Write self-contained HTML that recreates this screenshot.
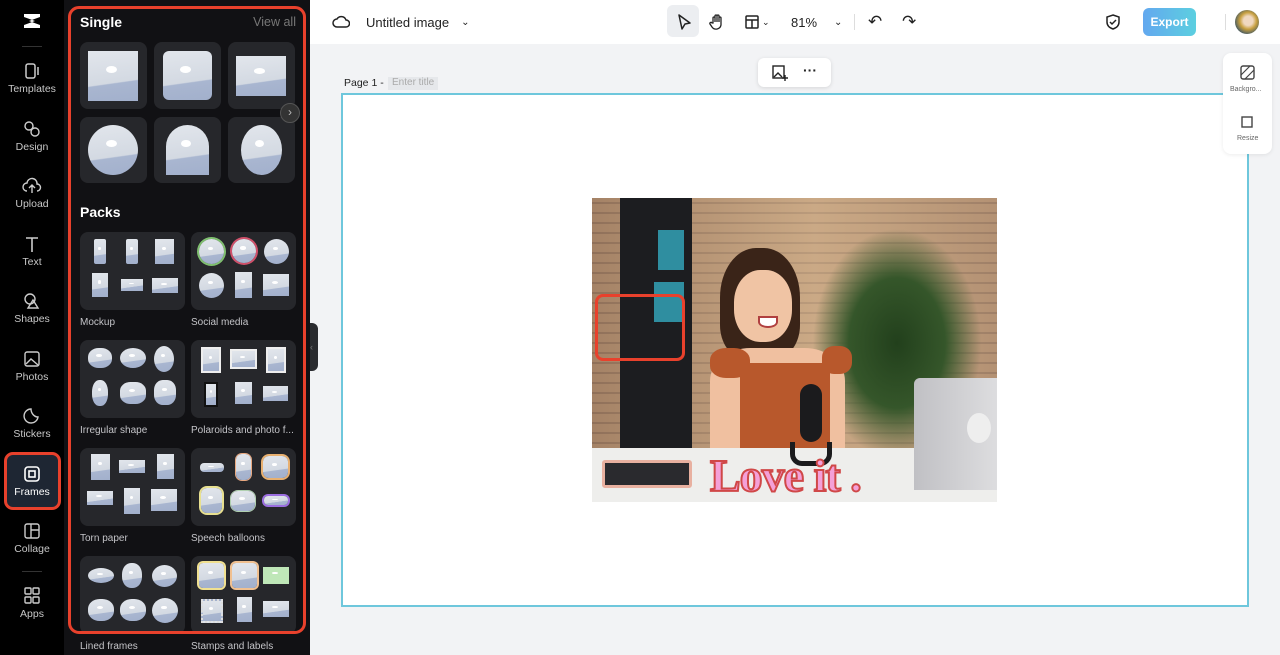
<!DOCTYPE html>
<html><head><meta charset="utf-8"><style>
*{margin:0;padding:0;box-sizing:border-box}
body{width:1280px;height:655px;overflow:hidden;font-family:"Liberation Sans",sans-serif;background:#f2f3f5;position:relative}
.abs{position:absolute}
#side{left:0;top:0;width:64px;height:655px;background:#000}
.si{position:absolute;left:0;width:64px;text-align:center;color:#c8c8c8;font-size:10.5px}
.si svg{display:block;margin:0 auto 3px}
#panel{left:64px;top:0;width:246px;height:655px;background:#111114}
.card{position:absolute;background:#26272b;border-radius:8px}
.ph{position:absolute;background:linear-gradient(172deg,#e2e6ec 0%,#d3d9e2 62%,#a9b6d0 64%,#a2b0cc 100%)}
.ph::after{content:"";position:absolute;left:35%;top:30%;width:22%;height:14%;background:#fff;border-radius:50%}
.lbl{position:absolute;color:#c4c4c8;font-size:10px}
h3{position:absolute;color:#fff;font-size:14px;font-weight:bold}
#top{left:310px;top:0;width:970px;height:44px;background:#fff}
.tb{position:absolute;top:0;height:44px;display:flex;align-items:center;font-size:13px;color:#222}
</style></head><body>
<div id="side" class="abs">
 <div class="si" style="top:10px"><svg width="22" height="22" viewBox="0 0 22 22"><path d="M3 4 L19 4 L19 7 L8 11 L19 15 L19 18 L3 18 L3 15 L14 11 L3 7Z" fill="#fff"/></svg></div>
 <div class="abs" style="left:22px;top:46px;width:20px;height:1px;background:#333"></div>
 <div class="si" style="top:62px"><svg width="20" height="18"><rect x="4" y="2" width="9" height="14" rx="2" fill="none" stroke="#ccc" stroke-width="1.5"/><path d="M16 5v8" stroke="#ccc" stroke-width="1.5"/></svg>Templates</div>
 <div class="si" style="top:120px"><svg width="20" height="18"><circle cx="7" cy="6" r="4" fill="none" stroke="#ccc" stroke-width="1.4"/><circle cx="13" cy="12" r="4" fill="none" stroke="#ccc" stroke-width="1.4"/></svg>Design</div>
 <div class="si" style="top:177px"><svg width="20" height="18"><path d="M5 14a4 4 0 0 1 0-8 5 5 0 0 1 10 1 3.5 3.5 0 0 1 0 7M10 16V9M7 11l3-3 3 3" fill="none" stroke="#ccc" stroke-width="1.4"/></svg>Upload</div>
 <div class="si" style="top:235px"><svg width="20" height="18"><path d="M4 3h12M10 3v14" stroke="#ccc" stroke-width="1.6"/></svg>Text</div>
 <div class="si" style="top:292px"><svg width="20" height="18"><circle cx="8" cy="7" r="5" fill="none" stroke="#ccc" stroke-width="1.4"/><path d="M11 8l5 8H6z" fill="none" stroke="#ccc" stroke-width="1.4"/></svg>Shapes</div>
 <div class="si" style="top:350px"><svg width="20" height="18"><rect x="3" y="2" width="14" height="14" rx="2" fill="none" stroke="#ccc" stroke-width="1.4"/><path d="M4 14l5-5 7 6" fill="none" stroke="#ccc" stroke-width="1.4"/></svg>Photos</div>
 <div class="si" style="top:407px"><svg width="20" height="18"><path d="M16 10A7 7 0 1 1 9 2c0 4 3 8 7 8z" fill="none" stroke="#ccc" stroke-width="1.4"/></svg>Stickers</div>
 <div class="abs" style="left:4px;top:452px;width:57px;height:58px;border:3px solid #e8412c;border-radius:9px;background:#1e2633"></div>
 <div class="si" style="top:465px;color:#fff"><svg width="20" height="18"><rect x="3" y="2" width="14" height="14" rx="3" fill="none" stroke="#fff" stroke-width="1.6"/><rect x="7" y="6" width="6" height="6" fill="none" stroke="#fff" stroke-width="1.6"/></svg>Frames</div>
 <div class="si" style="top:522px"><svg width="20" height="18"><rect x="3" y="2" width="14" height="14" rx="2" fill="none" stroke="#ccc" stroke-width="1.4"/><path d="M9 2v14M9 8h8" stroke="#ccc" stroke-width="1.4"/></svg>Collage</div>
 <div class="abs" style="left:22px;top:571px;width:20px;height:1px;background:#333"></div>
 <div class="si" style="top:587px"><svg width="20" height="18"><rect x="3" y="1" width="6" height="6" rx="1" fill="none" stroke="#ccc" stroke-width="1.4"/><rect x="11" y="1" width="6" height="6" rx="1" fill="none" stroke="#ccc" stroke-width="1.4"/><rect x="3" y="10" width="6" height="6" rx="1" fill="none" stroke="#ccc" stroke-width="1.4"/><rect x="11" y="10" width="6" height="6" rx="1" fill="none" stroke="#ccc" stroke-width="1.4"/></svg>Apps</div>
</div>

<div id="panel" class="abs">
 <h3 style="left:16px;top:14px">Single</h3>
 <div class="abs" style="right:14px;top:15px;color:#777;font-size:12.5px">View all</div>
 <div class="card" style="left:16px;top:42px;width:67px;height:67px"><div class="ph" style="left:8px;top:9px;width:50px;height:50px"></div></div>
 <div class="card" style="left:90px;top:42px;width:67px;height:67px"><div class="ph" style="left:9px;top:9px;width:49px;height:49px;border-radius:6px"></div></div>
 <div class="card" style="left:164px;top:42px;width:67px;height:67px"><div class="ph" style="left:8px;top:14px;width:50px;height:40px"></div></div>
 <div class="card" style="left:16px;top:117px;width:67px;height:66px"><div class="ph" style="left:8px;top:8px;width:50px;height:50px;border-radius:50%"></div></div>
 <div class="card" style="left:90px;top:117px;width:67px;height:66px"><div class="ph" style="left:12px;top:8px;width:43px;height:50px;border-radius:22px 22px 0 0"></div></div>
 <div class="card" style="left:164px;top:117px;width:67px;height:66px"><div class="ph" style="left:13px;top:8px;width:41px;height:50px;border-radius:50%"></div></div>
 <div class="abs" style="left:216px;top:103px;width:20px;height:20px;border-radius:50%;background:#333;border:1px solid #555;color:#bbb;font-size:12px;text-align:center;line-height:17px">›</div>
 <h3 style="left:16px;top:204px">Packs</h3>

 <div class="card" style="left:16px;top:232px;width:105px;height:78px">
  <div class="ph" style="left:14px;top:7px;width:12px;height:25px;border-radius:2px"></div><div class="ph" style="left:46px;top:7px;width:12px;height:25px;border-radius:2px"></div><div class="ph" style="left:75px;top:7px;width:19px;height:25px"></div>
  <div class="ph" style="left:12px;top:41px;width:16px;height:24px"></div><div class="ph" style="left:41px;top:47px;width:22px;height:12px"></div><div class="ph" style="left:72px;top:46px;width:26px;height:15px"></div></div>
 <div class="lbl" style="left:16px;top:317px">Mockup</div>
 <div class="card" style="left:127px;top:232px;width:105px;height:78px">
  <div class="ph" style="left:8px;top:7px;width:25px;height:25px;border-radius:50%;box-shadow:0 0 0 2px #7fbf6f"></div><div class="ph" style="left:41px;top:7px;width:24px;height:24px;border-radius:50%;box-shadow:0 0 0 2px #d0506a"></div><div class="ph" style="left:73px;top:7px;width:25px;height:25px;border-radius:50%"></div>
  <div class="ph" style="left:8px;top:41px;width:25px;height:25px;border-radius:50%"></div><div class="ph" style="left:44px;top:40px;width:17px;height:26px"></div><div class="ph" style="left:72px;top:42px;width:26px;height:22px"></div></div>
 <div class="lbl" style="left:127px;top:317px">Social media</div>

 <div class="card" style="left:16px;top:340px;width:105px;height:78px">
  <div class="ph" style="left:8px;top:8px;width:24px;height:20px;border-radius:45%"></div><div class="ph" style="left:40px;top:8px;width:26px;height:20px;border-radius:50%"></div><div class="ph" style="left:74px;top:6px;width:20px;height:26px;border-radius:50%"></div>
  <div class="ph" style="left:12px;top:40px;width:16px;height:26px;border-radius:45%"></div><div class="ph" style="left:40px;top:42px;width:26px;height:22px;border-radius:40%"></div><div class="ph" style="left:74px;top:40px;width:22px;height:25px;border-radius:40%"></div></div>
 <div class="lbl" style="left:16px;top:425px">Irregular shape</div>
 <div class="card" style="left:127px;top:340px;width:105px;height:78px">
  <div class="ph" style="left:10px;top:7px;width:20px;height:26px;border:2px solid #eee"></div><div class="ph" style="left:39px;top:9px;width:27px;height:20px;border:2px solid #eee"></div><div class="ph" style="left:75px;top:7px;width:20px;height:26px;border:2px solid #eee"></div>
  <div class="ph" style="left:13px;top:42px;width:14px;height:25px;border:2px solid #111"></div><div class="ph" style="left:44px;top:42px;width:17px;height:22px"></div><div class="ph" style="left:72px;top:46px;width:25px;height:15px"></div></div>
 <div class="lbl" style="left:127px;top:425px">Polaroids and photo f...</div>

 <div class="card" style="left:16px;top:448px;width:105px;height:78px">
  <div class="ph" style="left:11px;top:6px;width:19px;height:26px"></div><div class="ph" style="left:39px;top:12px;width:26px;height:13px"></div><div class="ph" style="left:77px;top:6px;width:17px;height:25px"></div>
  <div class="ph" style="left:7px;top:43px;width:26px;height:14px"></div><div class="ph" style="left:44px;top:40px;width:16px;height:26px"></div><div class="ph" style="left:71px;top:41px;width:26px;height:22px"></div></div>
 <div class="lbl" style="left:16px;top:533px">Torn paper</div>
 <div class="card" style="left:127px;top:448px;width:105px;height:78px">
  <div class="ph" style="left:9px;top:15px;width:24px;height:9px;border-radius:4px"></div><div class="ph" style="left:45px;top:6px;width:15px;height:26px;border-radius:6px;box-shadow:0 0 0 1px #e8a880"></div><div class="ph" style="left:72px;top:8px;width:25px;height:22px;border-radius:6px;box-shadow:0 0 0 2px #e8b070"></div>
  <div class="ph" style="left:10px;top:40px;width:21px;height:25px;border-radius:6px;box-shadow:0 0 0 2px #e8e090"></div><div class="ph" style="left:40px;top:43px;width:24px;height:20px;border-radius:7px;box-shadow:0 0 0 1px #b0d0b0"></div><div class="ph" style="left:73px;top:48px;width:24px;height:9px;border-radius:4px;box-shadow:0 0 0 2px #9b6ee0"></div></div>
 <div class="lbl" style="left:127px;top:533px">Speech balloons</div>

 <div class="card" style="left:16px;top:556px;width:105px;height:78px">
  <div class="ph" style="left:8px;top:12px;width:26px;height:15px;border-radius:50%"></div><div class="ph" style="left:42px;top:7px;width:20px;height:25px;border-radius:45%"></div><div class="ph" style="left:72px;top:9px;width:25px;height:22px;border-radius:50%"></div>
  <div class="ph" style="left:8px;top:43px;width:26px;height:22px;border-radius:45%"></div><div class="ph" style="left:40px;top:43px;width:26px;height:22px;border-radius:45%"></div><div class="ph" style="left:72px;top:42px;width:26px;height:25px;border-radius:50%"></div></div>
 <div class="lbl" style="left:16px;top:641px">Lined frames</div>
 <div class="card" style="left:127px;top:556px;width:105px;height:78px">
  <div class="ph" style="left:8px;top:7px;width:25px;height:25px;border-radius:4px;box-shadow:0 0 0 2px #f0e090"></div><div class="ph" style="left:41px;top:7px;width:25px;height:25px;border-radius:4px;box-shadow:0 0 0 2px #f0c090"></div><div class="ph" style="left:72px;top:11px;width:26px;height:17px;background:#bfe7b8"></div>
  <div class="ph" style="left:10px;top:43px;width:22px;height:24px;border:2px dotted #ddd"></div><div class="ph" style="left:46px;top:41px;width:15px;height:25px"></div><div class="ph" style="left:72px;top:45px;width:26px;height:16px"></div></div>
 <div class="lbl" style="left:127px;top:641px">Stamps and labels</div>
 <div class="abs" style="left:4px;top:6px;width:238px;height:628px;border:3px solid #e8412c;border-radius:11px"></div>
 <div class="abs" style="left:246px;top:323px;width:8px;height:48px;background:#2a2b2f;border-radius:0 6px 6px 0;color:#777;font-size:9px;line-height:48px">‹</div>
</div>

<div id="top" class="abs">
 <div class="tb" style="left:22px"><svg width="18" height="16"><path d="M5 13a4 4 0 0 1 0-8 5 5 0 0 1 9 1 3.5 3.5 0 0 1 0 7z" fill="none" stroke="#222" stroke-width="1.5"/></svg><span style="margin-left:16px">Untitled image</span><span style="margin-left:12px;font-size:10px">⌄</span></div>
 <div class="abs" style="left:357px;top:5px;width:32px;height:32px;background:#eceef1;border-radius:6px"></div>
 <div class="tb" style="left:366px"><svg width="16" height="18"><path d="M3 2l11 8-5 1-3 5z" fill="none" stroke="#222" stroke-width="1.5" stroke-linejoin="round"/></svg></div>
 <div class="tb" style="left:399px"><svg width="16" height="18"><path d="M4 10V5a1 1 0 0 1 2 0v4V3a1 1 0 0 1 2 0v6V3a1 1 0 0 1 2 0v6V5a1 1 0 0 1 2 0v7a5 5 0 0 1-9 2l-2-3a1 1 0 0 1 2-1z" fill="none" stroke="#222" stroke-width="1.3"/></svg></div>
 <div class="tb" style="left:434px"><svg width="16" height="16"><rect x="2" y="2" width="12" height="12" rx="1" fill="none" stroke="#222" stroke-width="1.5"/><path d="M2 6h12M8 6v8" stroke="#222" stroke-width="1.5"/></svg><span style="font-size:9px;margin-left:2px">⌄</span></div>
 <div class="tb" style="left:481px">81%</div>
 <div class="tb" style="left:524px;font-size:10px">⌄</div>
 <div class="abs" style="left:544px;top:14px;width:1px;height:16px;background:#ddd"></div>
 <div class="tb" style="left:558px;font-size:17px">↶</div>
 <div class="tb" style="left:592px;font-size:17px">↷</div>
 <div class="tb" style="left:795px"><svg width="16" height="18"><path d="M8 2l6 2v5c0 4-3 6-6 7-3-1-6-3-6-7V4z" fill="none" stroke="#222" stroke-width="1.5"/><path d="M5 9l2 2 4-4" fill="none" stroke="#222" stroke-width="1.5"/></svg></div>
 <div class="abs" style="left:833px;top:8px;width:53px;height:28px;border-radius:6px;background:linear-gradient(90deg,#63a8ef,#5ccfe0);color:#fff;font-size:12px;font-weight:bold;text-align:center;line-height:28px">Export</div>
 <div class="abs" style="left:915px;top:14px;width:1px;height:16px;background:#ddd"></div>
 <div class="abs" style="left:925px;top:10px;width:24px;height:24px;border-radius:50%;background:radial-gradient(circle at 55% 45%,#f0d8c0 25%,#c8a040 45%,#2b4c6a 80%)"></div>
</div>

<div class="abs" style="left:758px;top:58px;width:73px;height:29px;background:#fff;border-radius:6px;box-shadow:0 1px 4px rgba(0,0,0,.12)"></div>
<svg class="abs" style="left:771px;top:64px" width="18" height="18"><rect x="2" y="2" width="11" height="12" fill="none" stroke="#222" stroke-width="1.4"/><path d="M3 13l4-4 4 4M14 11v6M11 14h6" fill="none" stroke="#222" stroke-width="1.4"/></svg>
<div class="abs" style="left:803px;top:62px;font-size:14px;font-weight:bold;color:#222">···</div>
<div class="abs" style="left:344px;top:77px;font-size:10.5px;color:#222">Page 1 -</div>
<div class="abs" style="left:388px;top:77px;height:13px;padding:0 4px;background:#e6e8eb;font-size:10px;color:#aaa">Enter title</div>

<div class="abs" style="left:341px;top:93px;width:908px;height:514px;background:#fff;border:2px solid #6ec7dc"></div>

<div class="abs" style="left:1223px;top:53px;width:49px;height:101px;background:#fff;border-radius:8px;box-shadow:0 1px 4px rgba(0,0,0,.08)"></div>
<svg class="abs" style="left:1240px;top:65px" width="15" height="15"><rect x="1" y="1" width="13" height="13" rx="2" fill="none" stroke="#444" stroke-width="1.4"/><path d="M1 10l9-9M5 14l9-9" stroke="#444" stroke-width="1.2"/></svg>
<div class="abs" style="left:1230px;top:86px;font-size:7px;color:#666">Backgro...</div>
<svg class="abs" style="left:1240px;top:114px" width="15" height="15"><rect x="2" y="3" width="10" height="10" fill="none" stroke="#444" stroke-width="1.4"/></svg>
<div class="abs" style="left:1237px;top:135px;font-size:7px;color:#666">Resize</div>

<!-- photo -->
<div class="abs" style="left:592px;top:198px;width:405px;height:304px;overflow:hidden;background:repeating-linear-gradient(0deg,#b89474 0 8px,#9a7a62 8px 10px),#a08062">
 <div class="abs" style="left:0;top:0;width:405px;height:250px;background:linear-gradient(90deg,rgba(120,90,70,.3),rgba(225,195,155,.45) 55%,rgba(170,140,115,.3))"></div>
 <div class="abs" style="left:28px;top:0;width:72px;height:250px;background:#1c1d20"></div>
 <div class="abs" style="left:66px;top:32px;width:26px;height:40px;background:#2f8ea0"></div>
 <div class="abs" style="left:62px;top:84px;width:30px;height:40px;background:#2f8ea0"></div>
 <div class="abs" style="left:220px;top:30px;width:170px;height:230px;background:radial-gradient(ellipse at 50% 50%,#22401c 0%,#35562a 40%,transparent 70%)"></div>
 <div class="abs" style="left:128px;top:50px;width:80px;height:110px;border-radius:45% 45% 30% 30%;background:#3a2418"></div>
 <div class="abs" style="left:142px;top:72px;width:58px;height:72px;border-radius:45%;background:#f0c4a4"></div>
 <div class="abs" style="left:166px;top:118px;width:20px;height:12px;border-radius:0 0 50% 50%;background:#fff;border:2px solid #b04040"></div>
 <div class="abs" style="left:118px;top:150px;width:135px;height:110px;border-radius:30% 30% 0 0;background:#f0c0a0"></div>
 <div class="abs" style="left:148px;top:165px;width:90px;height:92px;background:#b8582c"></div>
 <div class="abs" style="left:118px;top:150px;width:40px;height:30px;background:#b8582c;border-radius:40%"></div>
 <div class="abs" style="left:230px;top:148px;width:30px;height:28px;background:#b8582c;border-radius:40%"></div>
 <div class="abs" style="left:0;top:250px;width:405px;height:54px;background:#eeeeec"></div>
 <div class="abs" style="left:322px;top:180px;width:86px;height:112px;background:linear-gradient(90deg,#c0c0c4,#dedee0);border-radius:6px 0 0 0"></div>
 <div class="abs" style="left:375px;top:215px;width:24px;height:30px;border-radius:50%;background:#eee"></div>
 <div class="abs" style="left:208px;top:186px;width:22px;height:58px;border-radius:11px;background:#1b1b1d"></div>
 <div class="abs" style="left:198px;top:244px;width:42px;height:24px;border:5px solid #1b1b1d;border-top:none;border-radius:0 0 12px 12px"></div>
 <div class="abs" style="left:10px;top:262px;width:90px;height:28px;background:#2a2a2e;border:3px solid #e8b0a0;border-radius:3px"></div>
 <div class="abs" style="left:118px;top:251px;font-family:'Liberation Serif',serif;font-weight:bold;font-size:46px;color:#f4a0d8;-webkit-text-stroke:2px #d04848;letter-spacing:-1px">Love it .</div>
</div>
<div class="abs" style="left:595px;top:294px;width:90px;height:67px;border:3px solid #e8412c;border-radius:8px"></div>
</body></html>
